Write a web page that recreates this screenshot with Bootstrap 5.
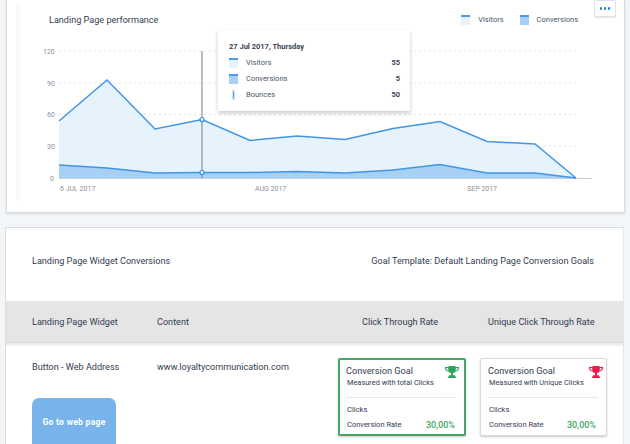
<!DOCTYPE html>
<html lang="en">
<head>
<meta charset="utf-8">
<title>Landing Page performance</title>
<link href="https://cdn.jsdelivr.net/npm/bootstrap@5.3.0/dist/css/bootstrap.min.css" rel="stylesheet">
<style>
html,body{height:444px;overflow:hidden}
body{background:#f2f6f9;font-family:Roboto,"Liberation Sans",sans-serif;color:#333d50;font-size:9.1px;line-height:12px;letter-spacing:0}
.panel-a{margin:0 5px 14px 6px;height:213px;background:#fff;border:1px solid #d9dde1;border-top:0;box-shadow:0 1px 2px rgba(0,0,0,.12);position:relative}
.panel-b{margin:0 6px 0 5px;height:217px;overflow:hidden;background:#fff;border:1px solid #d9dde1;border-bottom:0;border-right-color:#e4e7ea}
.head-a{padding:14px 46px 0 42px;height:30px}
.key{gap:16px;color:#4a5668;font-size:7.5px}
.key-item{gap:8px}
.swatch{width:9px;height:10px;border-top:2px solid #4a9be8;background:#e6f2fc;display:block}
.swatch-dark{background:#a6d0f4}
.band{position:absolute;left:9px;top:3px;width:4px;height:198px;background:#f7fafc}
.more-btn{position:absolute;top:0;right:8px;width:22px;height:17px;padding:0;background:#fff;border:1px solid #dfe2e6;border-radius:2px;box-shadow:0 1px 1px rgba(0,0,0,.1);display:flex;align-items:center;justify-content:center;gap:1.5px}
.more-btn i{width:2.500px;height:2.500px;border-radius:50%;background:#1b7cf0;display:block}
.chart{display:block;margin-left:-1px;position:relative}
.chart text{font-family:Roboto,"Liberation Sans",sans-serif;font-size:7px;fill:#8b939d;letter-spacing:0}
.tip{position:absolute;left:211px;top:30px;width:192px;height:81px;background:#fff;box-shadow:0 2px 4px rgba(0,0,0,.22);padding:11px 10px 0 11px;font-size:7.5px;color:#4a5668}
.tip-title{font-weight:700;color:#3a4454;margin-bottom:2px;height:12px}
.tip-row{height:16px;gap:8px}
.tip-row b{font-weight:700;color:#3a4454;margin-left:auto}
.tip-ico{width:9px;display:flex;justify-content:center}
.title-b{height:73px;padding:0 29px 7px 26px}
.grid-row{display:grid;grid-template-columns:125px 205px 126px 1fr;padding-left:26px}
.grid-head{background:#e5e5e5;height:42px;align-items:center;border-bottom:1px solid #d9d9d9}
.rule{height:3px;background:#efefef}
.grid-body{grid-template-columns:125px 181px 142px 1fr;padding-top:12px}
.cell{padding-top:3px}
.go-btn{margin-top:25px;width:84px;height:46px;background:#78b3ec;color:#fff;border:0;border-radius:7px 7px 0 0;font-size:8.5px;font-weight:700;padding:2px 0 0;display:block;letter-spacing:.3px}
.goal{width:127px;height:78px;background:#fff;border:1px solid #dcdcdc;box-shadow:0 1px 2px rgba(0,0,0,.22);border-radius:2px;padding:6px 8px 0 7px;position:relative}
.goal-green{width:128px;border:2px solid #45a768;padding:5px 7px 0 6px}
.goal-t{font-size:9.2px;line-height:12px;margin-bottom:1px}
.goal-s{font-size:7.4px;line-height:10px;padding-left:1px}
.goal-line{height:1px;background:#e8e8e8;margin:9px 0 7px}
.goal-f{font-size:7.600px;line-height:10px;padding-left:1px}
.goal-rate{font-size:7.5px;margin-top:4px;align-items:center;line-height:12px;padding-left:1px}
.goal-rate b{font-weight:500;font-size:9px;color:#3caa64;margin-right:2px}
.trophy{position:absolute;width:14px;height:12px;display:block}
.trophy-g{color:#2ea55e;right:5px;top:6px}
.trophy-r{color:#ef1d4b;right:3px;top:7px}
</style>
</head>
<body>
<section class="panel-a">
  <div class="band"></div>
  <div class="head-a d-flex justify-content-between align-items-start">
    <span>Landing Page performance</span>
    <div class="key d-flex">
      <span class="key-item d-flex align-items-center"><i class="swatch"></i>Visitors</span>
      <span class="key-item d-flex align-items-center"><i class="swatch swatch-dark"></i>Conversions</span>
    </div>
  </div>
  <button class="more-btn" type="button" aria-label="More"><i></i><i></i><i></i></button>
  <svg class="chart" width="619" height="183" viewBox="0 30 619 183">
    <g transform="translate(-6 0)">
      <g stroke="#dfe3e7" stroke-width="1" stroke-dasharray="2 3">
        <line x1="59" x2="577" y1="51" y2="51"/><line x1="59" x2="577" y1="83" y2="83"/><line x1="59" x2="577" y1="114.500" y2="114.500"/><line x1="59" x2="577" y1="146" y2="146"/>
      </g>
      <polygon fill="#e6f2fc" points="59,178 59,121 107,80 155,129 202,119.5 250,140.5 297,136 345,139.5 393,128.5 440,121.5 487,141.5 535,144 576,178"/>
      <polygon fill="#a6d0f4" points="59,178 59,165 107,168 155,173 202,172.5 250,172.5 297,171.5 345,173 393,170 440,164.5 487,173 535,173 576,178"/>
      <line x1="59" x2="592" y1="178.500" y2="178.500" stroke="#c5d0da"/>
      <polyline fill="none" stroke="#4296e6" stroke-width="1.500" points="59,121 107,80 155,129 202,119.5 250,140.5 297,136 345,139.500 393,128.500 440,121.500 487,141.500 535,144 576,178"/>
      <polyline fill="none" stroke="#4296e6" stroke-width="1.500" points="59,165 107,168 155,173 202,172.500 250,172.500 297,171.500 345,173 393,170 440,164.500 487,173 535,173 576,178"/>
      <line x1="202" x2="202" y1="51" y2="178" stroke="#8a929b" stroke-width="1.200"/>
      <circle cx="202" cy="119.500" r="2" fill="#fff" stroke="#2f8fe6" stroke-width="1.200"/>
      <circle cx="202" cy="172.500" r="2" fill="#fff" stroke="#2f8fe6" stroke-width="1.200"/>
      <text x="43" y="53.500">120</text><text x="47" y="85.500">90</text><text x="47" y="117">60</text><text x="47" y="148.500">30</text><text x="50" y="180.500">0</text>
      <text x="60" y="191">6 JUL 2017</text><text x="255" y="191">AUG 2017</text><text x="467" y="191">SEP 2017</text>
    </g>
  </svg>
  <div class="tip">
    <div class="tip-title">27 Jul 2017, Thursday</div>
    <div class="tip-row d-flex align-items-center"><span class="tip-ico"><i class="swatch"></i></span><span>Visitors</span><b>55</b></div>
    <div class="tip-row d-flex align-items-center"><span class="tip-ico"><i class="swatch swatch-dark"></i></span><span>Conversions</span><b>5</b></div>
    <div class="tip-row d-flex align-items-center"><span class="tip-ico"><svg width="5" height="10" viewBox="0 0 5 10"><line x1="2.500" y1="1" x2="2.500" y2="9" stroke="#4a9be8" stroke-width="1.500"/><circle cx="2.500" cy="1.500" r="1.300" fill="#a6d0f4"/><circle cx="2.500" cy="8.500" r="1.300" fill="#a6d0f4"/></svg></span><span>Bounces</span><b>50</b></div>
  </div>
</section>
<section class="panel-b">
  <div class="title-b d-flex justify-content-between align-items-center">
    <span>Landing Page Widget Conversions</span>
    <span>Goal Template: Default Landing Page Conversion Goals</span>
  </div>
  <div class="grid-row grid-head">
    <span>Landing Page Widget</span><span>Content</span><span>Click Through Rate</span><span>Unique Click Through Rate</span>
  </div>
  <div class="rule"></div>
  <div class="grid-row grid-body">
    <div class="cell">
      <div>Button - Web Address</div>
      <button class="go-btn" type="button">Go to web page</button>
    </div>
    <div class="cell">www.loyaltycommunication.com</div>
    <div class="goal goal-green">
      <svg class="trophy trophy-g" viewBox="0 0 14 13" preserveAspectRatio="none"><path fill="currentColor" d="M3.500 0h7v1H14v1.500c0 2-1.500 3.300-3.800 3.600C9.700 7 8.900 7.500 8 7.700V10h2v1.500h1V13H3v-1.500h1V10h2V7.700C5.100 7.500 4.300 7 3.800 6.100 1.500 5.800 0 4.500 0 2.500V1h3.500zM1.300 2.300v.3c0 1 .8 1.900 2.100 2.200-.2-.7-.3-1.600-.3-2.500zm11.400 0h-1.800c0 .9-.1 1.800-.3 2.500 1.300-.3 2.100-1.200 2.100-2.200z"/></svg>
      <div class="goal-t">Conversion Goal</div>
      <div class="goal-s">Measured with total Clicks</div>
      <div class="goal-line"></div>
      <div class="goal-f">Clicks</div>
      <div class="goal-rate d-flex justify-content-between"><span>Conversion Rate</span><b>30,00%</b></div>
    </div>
    <div class="goal">
      <svg class="trophy trophy-r" viewBox="0 0 14 13" preserveAspectRatio="none"><path fill="currentColor" d="M3.500 0h7v1H14v1.500c0 2-1.500 3.300-3.800 3.600C9.700 7 8.900 7.500 8 7.700V10h2v1.500h1V13H3v-1.500h1V10h2V7.700C5.100 7.500 4.300 7 3.800 6.100 1.500 5.800 0 4.500 0 2.500V1h3.500zM1.300 2.300v.3c0 1 .8 1.900 2.100 2.200-.2-.7-.3-1.600-.3-2.500zm11.400 0h-1.800c0 .9-.1 1.800-.3 2.500 1.300-.3 2.100-1.200 2.100-2.200z"/></svg>
      <div class="goal-t">Conversion Goal</div>
      <div class="goal-s">Measured with Unique Clicks</div>
      <div class="goal-line"></div>
      <div class="goal-f">Clicks</div>
      <div class="goal-rate d-flex justify-content-between"><span>Conversion Rate</span><b>30,00%</b></div>
    </div>
  </div>
</section>
<script src="https://cdn.jsdelivr.net/npm/bootstrap@5.3.0/dist/js/bootstrap.bundle.min.js"></script>
</body>
</html>
